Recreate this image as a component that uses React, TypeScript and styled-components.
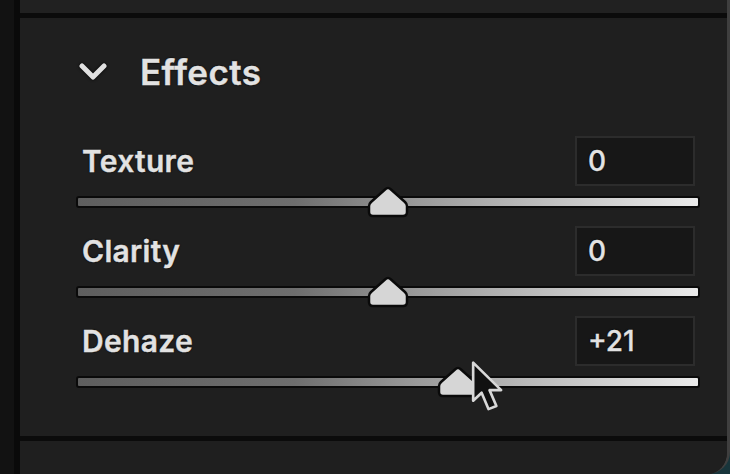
import styled, { createGlobalStyle } from "styled-components";

const GlobalStyle = createGlobalStyle`
  html, body {
    margin: 0;
    padding: 0;
    background: #18353b;
    overflow: hidden;
  }
  * {
    box-sizing: border-box;
  }
`;

type Effect = { label: string; value: number; pos: number };

const effects: Effect[] = [
  { label: "Texture", value: 0, pos: 50 },
  { label: "Clarity", value: 0, pos: 50 },
  { label: "Dehaze", value: 21, pos: 61.2 },
];

const formatValue = (value: number) => {
  return value > 0 ? `+${value}` : `${value}`;
};

export default function App() {
  return (
    <>
      <GlobalStyle />
      <Window>
        <Rail />
        <Main>
          <TopStrip />
          <Section>
            <Header>
              <Chevron viewBox="0 0 30 20">
                <path d="M4 4 L15 15 L26 4" />
              </Chevron>
              <Title>Effects</Title>
            </Header>
            <Rows>
              {effects.map((item) => (
                <Row key={item.label}>
                  <LabelRow>
                    <Label>{item.label}</Label>
                    <ValueBox>{formatValue(item.value)}</ValueBox>
                  </LabelRow>
                  <SliderArea>
                    <Track />
                    <Thumb style={{ left: `${item.pos}%` }} viewBox="0 0 42 32">
                      <path d="M21 2 Q22.5 2 24 3.5 L38 16 Q40 18 40 20 L40 26 Q40 30 36 30 L6 30 Q2 30 2 26 L2 20 Q2 18 4 16 L18 3.5 Q19.5 2 21 2 Z" />
                    </Thumb>
                  </SliderArea>
                </Row>
              ))}
            </Rows>
            <Cursor viewBox="0 0 36 52">
              <path d="M3 2 L3 38 L11 30.5 L17.5 46 L25 43 L18.5 28 L29.5 28 Z" />
            </Cursor>
          </Section>
          <NextPanel />
        </Main>
      </Window>
    </>
  );
}

const Window = styled.div`
  display: flex;
  width: 730px;
  height: 474px;
`;

const Rail = styled.div`
  width: 20px;
  flex-shrink: 0;
  background: #121212;
  border-right: 6px solid #0a0a0a;
`;

const Main = styled.div`
  flex: 1;
  display: flex;
  flex-direction: column;
  background: #1f1f1f;
  border-right: 3px solid #3f3f3f;
  border-bottom-right-radius: 22px;
  overflow: hidden;
`;

const TopStrip = styled.div`
  height: 18px;
  background: #212121;
  border-bottom: 5px solid #0b0b0b;
`;

const Section = styled.div`
  position: relative;
  height: 423px;
  padding: 34px 27px 0 56px;
  border-bottom: 5px solid #0b0b0b;
  font-family: Inter, "Liberation Sans", sans-serif;
  color: #e2e2e2;
`;

const Header = styled.div`
  display: flex;
  align-items: center;
  gap: 32px;
  height: 40px;
  padding-left: 2px;
`;

const Chevron = styled.svg`
  width: 30px;
  height: 20px;
  fill: none;
  stroke: #e0e0e0;
  stroke-width: 5;
  stroke-linecap: round;
  stroke-linejoin: round;
  filter: drop-shadow(0 0 1.5px #000);
`;

const Title = styled.span`
  font-size: 35px;
  font-weight: 600;
  letter-spacing: 0.4px;
  -webkit-text-stroke: 0.4px #e2e2e2;
  text-shadow: 0 0 2px #000, 0 0 1px #000;
`;

const Rows = styled.div`
  display: flex;
  flex-direction: column;
  margin-top: 44px;
`;

const Row = styled.div`
  display: flex;
  flex-direction: column;
  height: 90px;
`;

const LabelRow = styled.div`
  display: flex;
  align-items: center;
  justify-content: space-between;
  height: 50px;
  padding-left: 6px;
  padding-right: 5px;
`;

const Label = styled.span`
  font-size: 30px;
  font-weight: 600;
  letter-spacing: 0.3px;
  -webkit-text-stroke: 0.4px #e2e2e2;
  text-shadow: 0 0 2px #000, 0 0 1px #000;
`;

const ValueBox = styled.div`
  width: 120px;
  height: 50px;
  display: flex;
  align-items: center;
  padding-left: 11px;
  background: #171717;
  border: 2px solid #2c2c2c;
  font-size: 28px;
  font-weight: 500;
  -webkit-text-stroke: 0.3px #e2e2e2;
  text-shadow: 0 0 2px #000, 0 0 1px #000;
`;

const SliderArea = styled.div`
  position: relative;
  height: 32px;
  display: flex;
  align-items: center;
`;

const Track = styled.div`
  width: 100%;
  height: 12px;
  border: 2px solid #0a0a0a;
  border-radius: 3px;
  background: linear-gradient(to right, #5e5e5e, #6e6e6e 35%, #9a9a9a 55%, #eaeaea 100%);
`;

const Thumb = styled.svg`
  position: absolute;
  top: 0;
  width: 42px;
  height: 32px;
  transform: translateX(-50%);
  fill: #d6d6d6;
  stroke: #0a0a0a;
  stroke-width: 2.5;
  stroke-linejoin: round;
`;

const Cursor = styled.svg`
  position: absolute;
  left: 450px;
  top: 342px;
  width: 38px;
  height: 56px;
  fill: #111;
  stroke: #d8d8d8;
  stroke-width: 2.5;
  stroke-linejoin: round;
`;

const NextPanel = styled.div`
  flex: 1;
  background: #1f1f1f;
`;
